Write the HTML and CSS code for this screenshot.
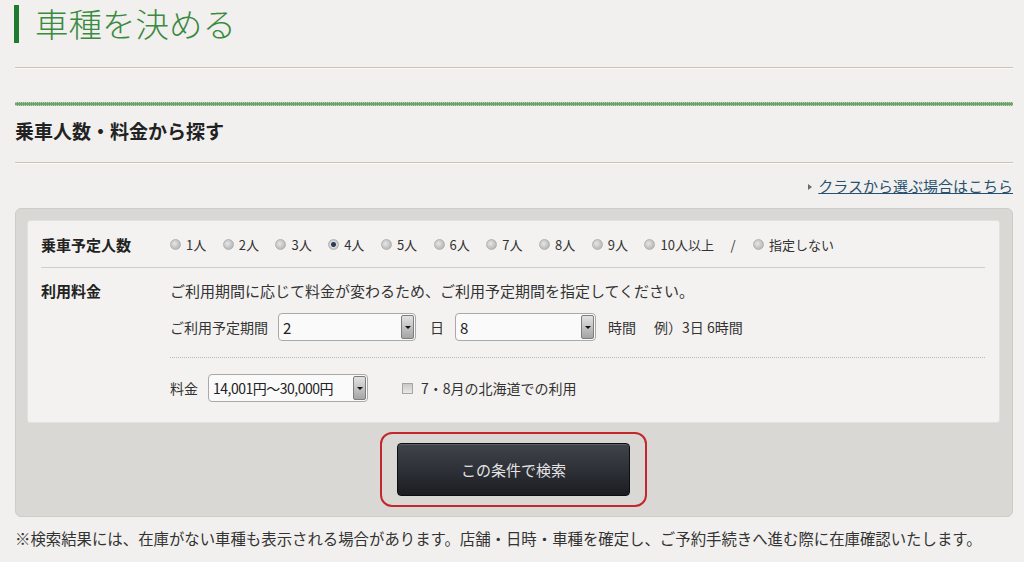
FILE: index.html
```html
<html>
	<head>
		<meta charset="utf-8">
		<link rel="stylesheet" href="styles.css">
	</head>
	<body>
		<div class="page">
  <h1 class="page-title">車種を決める</h1>
  <div class="rule"></div>
  <div class="green-rule"></div>
  <h2 class="section-title">乗車人数・料金から探す</h2>
  <div class="rule"></div>
  <div class="class-link">
    <span class="link-arrow"></span><a href="#">クラスから選ぶ場合はこちら</a>
  </div>

  <div class="search-box">
    <div class="search-panel">
      <div class="row row-people">
        <div class="row-label">乗車予定人数</div>
        <div class="radios">
          <span class="radio-item"><span class="radio"></span>1人</span>
          <span class="radio-item"><span class="radio"></span>2人</span>
          <span class="radio-item"><span class="radio"></span>3人</span>
          <span class="radio-item"><span class="radio checked"></span>4人</span>
          <span class="radio-item"><span class="radio"></span>5人</span>
          <span class="radio-item"><span class="radio"></span>6人</span>
          <span class="radio-item"><span class="radio"></span>7人</span>
          <span class="radio-item"><span class="radio"></span>8人</span>
          <span class="radio-item"><span class="radio"></span>9人</span>
          <span class="radio-item"><span class="radio"></span>10人以上</span>
          <span class="slash">/</span>
          <span class="radio-item"><span class="radio"></span>指定しない</span>
        </div>
      </div>

      <div class="row row-fee">
        <div class="row-label">利用料金</div>
        <div class="fee-body">
          <p class="fee-note">ご利用期間に応じて料金が変わるため、ご利用予定期間を指定してください。</p>
          <div class="period">
            <span class="field-label">ご利用予定期間</span>
            <div class="select select-day"><span class="value">2</span><span class="arrow"></span></div>
            <span class="unit">日</span>
            <div class="select select-hour"><span class="value">8</span><span class="arrow"></span></div>
            <span class="unit unit-hour">時間</span>
            <span class="example">例）3日 6時間</span>
          </div>
          <div class="fee-line">
            <span class="field-label">料金</span>
            <div class="select select-fee"><span class="value">14,001円〜30,000円</span><span class="arrow"></span></div>
            <span class="checkbox"></span>
            <span class="check-label">7・8月の北海道での利用</span>
          </div>
        </div>
      </div>
    </div>

    <div class="search-action">
      <span class="highlight">
        <span class="search-btn">この条件で検索</span>
      </span>
    </div>
  </div>

  <p class="notice">※検索結果には、在庫がない車種も表示される場合があります。店舗・日時・車種を確定し、ご予約手続きへ進む際に在庫確認いたします。</p>
</div>
	</body>

</html>
```

FILE: styles.css
```css
body {
  margin: 0;
  background-color: #f1f0ee;
  color: #333;
  font-family: "Noto Sans CJK JP", "Noto Sans", sans-serif;
}

.page {
  padding: 0 11px 0 15px;
}

.page-title {
  margin: 5px 0 0 -1px;
  height: 38px;
  padding-left: 16px;
  border-left: 5px solid #1e7a2c;
  color: #3a8a3f;
  font-size: 33.5px;
  font-weight: 300;
  line-height: 36px;
}

.rule {
  margin-top: 24px;
  border-top: 1px solid #c8c4b6;
  border-bottom: 1px solid #fbfaf8;
}

.green-rule {
  margin-top: 33px;
  height: 2px;
  background-color: #6ea56c;
  border-top: 1px dotted #b7cdb4;
  border-bottom: 1px dotted #c9d8c6;
}

.section-title {
  margin: 11px 0 0;
  height: 28px;
  color: #222;
  font-size: 19px;
  font-weight: bold;
  line-height: 28px;
}

.section-title + .rule {
  margin-top: 17px;
}

.class-link {
  margin-top: 12px;
  height: 20px;
  text-align: right;
  font-size: 15px;
  line-height: 20px;
}

.class-link a {
  color: #28506f;
  text-decoration: underline;
}

.link-arrow {
  display: inline-block;
  margin-right: 6px;
  border-left: 4px solid #6b6b6b;
  border-top: 3px solid transparent;
  border-bottom: 3px solid transparent;
  vertical-align: 2px;
}

/* grey outer box */
.search-box {
  margin-top: 12px;
  padding: 11px 12px 9px 11px;
  background-color: #d9d8d5;
  border: 1px solid #cdccc9;
  border-radius: 6px;
}

.search-panel {
  padding: 0 14px 0 13px;
  background-color: #f3f2f0;
  border: 1px solid #e2e1de;
  border-radius: 3px;
}

.row {
  display: flex;
}

.row-label {
  width: 129px;
  flex-shrink: 0;
  color: #222;
  font-size: 15px;
  font-weight: bold;
}

.row-people {
  height: 46px;
  align-items: center;
  border-bottom: 1px solid #cfcdc8;
}

.radios {
  display: flex;
  align-items: center;
  gap: 16.5px;
  font-size: 13px;
  color: #333;
}

.radio-item {
  display: flex;
  align-items: center;
}

.radio {
  display: inline-block;
  width: 9px;
  height: 9px;
  margin-right: 5px;
  border: 1px solid #b3b3b3;
  border-radius: 50%;
  background: radial-gradient(circle at 40% 40%, #e6e6e6, #a8a8a8);
}

.radio.checked {
  background: radial-gradient(circle, #2b3d55 0, #2b3d55 2px, #dcdcdc 3px, #a8a8a8);
}

.slash {
  margin: 0 1px 0 0;
}

.row-fee {
  padding-top: 12px;
  padding-bottom: 20px;
}

.row-fee .row-label {
  line-height: 22px;
}

.fee-body {
  flex: 1;
}

.fee-note {
  margin: 0;
  font-size: 15px;
  line-height: 22px;
  color: #333;
}

.period,
.fee-line {
  display: flex;
  align-items: center;
  font-size: 14px;
}

.period {
  margin-top: 11px;
  padding-bottom: 16px;
  border-bottom: 1px dotted #b9b7b2;
}

.fee-line {
  margin-top: 16px;
}

.field-label {
  margin-right: 10px;
}

.unit {
  margin: 0 11px 0 14px;
}

.unit-hour {
  margin-left: 12px;
  margin-right: 18px;
}

.select {
  display: flex;
  align-items: center;
  justify-content: space-between;
  height: 26px;
  padding: 0 1px 0 4px;
  background-color: #fafafa;
  border: 1px solid #a9a9a9;
  border-radius: 4px;
  font-size: 15px;
  color: #222;
}

.select-day {
  width: 131px;
}

.select-hour {
  width: 134px;
}

.select-fee {
  width: 153px;
  margin-right: 34px;
  font-size: 14px;
  letter-spacing: -0.5px;
}

.arrow {
  position: relative;
  width: 13px;
  height: 24px;
  background: linear-gradient(#e2e2e2, #a5a5a5);
  border: 1px solid #7d7d7d;
  border-radius: 2px;
  box-sizing: border-box;
}

.arrow::after {
  content: "";
  position: absolute;
  top: 10px;
  left: 3px;
  border-top: 3px solid #111;
  border-left: 3px solid transparent;
  border-right: 3px solid transparent;
}

.checkbox {
  width: 9px;
  height: 9px;
  margin-right: 8px;
  border: 1px solid #a5a5a5;
  background: linear-gradient(#c9c9c9, #e8e8e8);
}

.check-label {
  font-size: 14px;
}

.search-action {
  padding: 9px 0 0;
  text-align: center;
}

/* red hand-drawn annotation */
.highlight {
  display: inline-block;
  padding: 9px 15px;
  border: 2px solid #c3272d;
  border-radius: 12px;
}

.search-btn {
  display: block;
  width: 231px;
  height: 51px;
  background: linear-gradient(#40444b, #1b1d22);
  border: 1px solid #0d0e10;
  border-radius: 4px;
  box-shadow: inset 0 1px 0 #5a5e66;
  color: #e4e4e4;
  font-size: 15px;
  line-height: 51px;
}

.notice {
  margin: 10px 0 0;
  font-size: 15.4px;
  line-height: 22px;
  color: #333;
  white-space: nowrap;
}
```
